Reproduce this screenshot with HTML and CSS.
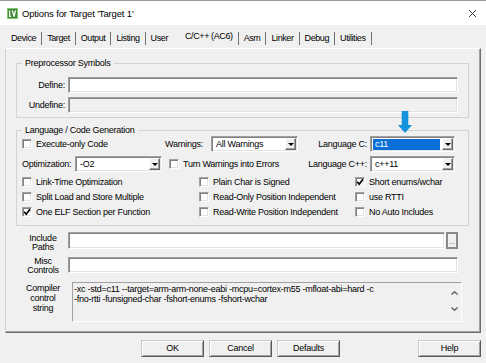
FILE: index.html
```html
<!DOCTYPE html>
<html lang="en">
<head>
    <meta charset="UTF-8">
    <meta name="viewport" content="width=device-width, initial-scale=1.0">
    <title>Options for Target 'Target 1'</title>
    <link rel="stylesheet" href="styles.css">
</head>
<body>

<div class="dialog">
    <div class="titlebar">
        <svg class="app-icon" viewBox="0 0 11 11">
            <rect width="11" height="11" fill="#3b8a35"/>
            <rect x="0.5" y="0.5" width="10" height="10" fill="none" stroke="#86c46f"/>
            <path d="M2.6 2.4v6h1.6M5.4 2.4l1.6 6.2 1.6-6.2" stroke="#fff" stroke-width="1.3" fill="none"/>
        </svg>
        <span class="title">Options for Target 'Target 1'</span>
        <svg class="close" viewBox="0 0 7 7">
            <path d="M0 0L7 7M7 0L0 7" stroke="#222" stroke-width="0.9"/>
        </svg>
    </div>

    <div class="tabs">
        <span class="tab">Device</span>
        <span class="tab">Target</span>
        <span class="tab">Output</span>
        <span class="tab">Listing</span>
        <span class="tab tab-user">User</span>
        <span class="tab tab-active">C/C++ (AC6)</span>
        <span class="tab">Asm</span>
        <span class="tab">Linker</span>
        <span class="tab">Debug</span>
        <span class="tab">Utilities</span>
    </div>

    <div class="panel">
        <fieldset class="group group-pre">
            <legend>Preprocessor Symbols</legend>
            <div class="field-row">
                <span class="field-label">Define:</span>
                <div class="edit"></div>
            </div>
            <div class="field-row">
                <span class="field-label">Undefine:</span>
                <div class="edit edit-disabled"></div>
            </div>
        </fieldset>

        <fieldset class="group group-lang">
            <legend>Language / Code Generation</legend>
            <div class="lang-top">
                <div class="check"><span class="box"></span>Execute-only Code</div>
                <div class="pair">
                    <span class="warn-label">Warnings:</span>
                    <div class="combo combo-small">
                        <span class="combo-text">All Warnings</span>
                        <span class="drop"><svg viewBox="0 0 6 3"><path d="M0 0h6L3 3z"/></svg></span>
                    </div>
                </div>
                <span class="right-label">Language C:</span>
                <div class="combo">
                    <span class="combo-text combo-selected">c11</span>
                    <span class="drop"><svg viewBox="0 0 6 3"><path d="M0 0h6L3 3z"/></svg></span>
                </div>

                <div class="pair">
                    <span class="opt-label">Optimization:</span>
                    <div class="combo combo-small">
                        <span class="combo-text">-O2</span>
                        <span class="drop"><svg viewBox="0 0 6 3"><path d="M0 0h6L3 3z"/></svg></span>
                    </div>
                </div>
                <div class="check check-indent"><span class="box"></span>Turn Warnings into Errors</div>
                <span class="right-label">Language C++:</span>
                <div class="combo">
                    <span class="combo-text">c++11</span>
                    <span class="drop"><svg viewBox="0 0 6 3"><path d="M0 0h6L3 3z"/></svg></span>
                </div>
            </div>

            <div class="lang-checks">
                <div class="check"><span class="box"></span>Link-Time Optimization</div>
                <div class="check"><span class="box"></span>Plain Char is Signed</div>
                <div class="check"><span class="box checked"><svg viewBox="0 0 8 8"><path d="M1.2 3.8l2 2.4 3.8-5"/></svg></span>Short enums/wchar</div>

                <div class="check"><span class="box"></span>Split Load and Store Multiple</div>
                <div class="check"><span class="box"></span>Read-Only Position Independent</div>
                <div class="check"><span class="box"></span>use RTTI</div>

                <div class="check"><span class="box checked"><svg viewBox="0 0 8 8"><path d="M1.2 3.8l2 2.4 3.8-5"/></svg></span>One ELF Section per Function</div>
                <div class="check"><span class="box"></span>Read-Write Position Independent</div>
                <div class="check"><span class="box"></span>No Auto Includes</div>
            </div>
        </fieldset>

        <div class="path-row row-include">
            <span class="path-label">Include<br>Paths</span>
            <div class="edit edit-include"></div>
            <span class="browse">...</span>
        </div>

        <div class="path-row row-misc">
            <span class="path-label">Misc<br>Controls</span>
            <div class="edit edit-misc"></div>
        </div>

        <div class="path-row row-cmd">
            <span class="path-label">Compiler<br>control<br>string</span>
            <div class="cmd">
                <div class="cmd-text">
                    <span>-xc -std=c11 --target=arm-arm-none-eabi -mcpu=cortex-m55 -mfloat-abi=hard -c</span>
                    <span>-fno-rtti -funsigned-char -fshort-enums -fshort-wchar</span>
                </div>
                <div class="cmd-scroll">
                    <svg viewBox="0 0 7 4"><path d="M0.5 3.5L3.5 0.7 6.5 3.5"/></svg>
                    <svg viewBox="0 0 7 4"><path d="M0.5 0.5L3.5 3.3 6.5 0.5"/></svg>
                </div>
            </div>
        </div>
    </div>

    <div class="buttons">
        <span class="btn">OK</span>
        <span class="btn">Cancel</span>
        <span class="btn">Defaults</span>
        <span class="btn btn-help">Help</span>
    </div>

    <!-- callout pointing at the Language C combo -->
    <svg class="pointer" viewBox="0 0 14 22">
        <rect x="3.7" y="0" width="6.6" height="15" fill="#1592dd"/>
        <path d="M0 14h14L7 22z" fill="#1592dd"/>
    </svg>
</div>

</body>
</html>
```

FILE: styles.css
```css
/* General Styling */
* {
    box-sizing: border-box;
    margin: 0;
    padding: 0;
}

body {
    font-family: "Liberation Sans", Arial, sans-serif;
    font-size: 9px;
    letter-spacing: -0.25px;
    color: #000;
    background: #f0f0f0;
}

.dialog {
    position: relative;
    width: 486px;
    height: 363px;
    background: #f0f0f0;
    overflow: hidden;
}

/* Title bar */
.titlebar {
    display: flex;
    align-items: center;
    height: 25px;
    background: #fff;
    border-top: 1px solid #9a9a9a;
    padding-left: 7px;
}

.app-icon {
    width: 11px;
    height: 11px;
    margin-right: 4px;
}

.title {
    flex: 1;
    font-size: 9.5px;
    letter-spacing: -0.15px;
}

.close {
    width: 7px;
    height: 7px;
    margin-right: 10px;
}

/* Tabs */
.tabs {
    display: flex;
    height: 13px;
    margin-top: 7px;
    padding-left: 6px;
    letter-spacing: -0.4px;
}

.tab {
    height: 13px;
    padding: 0 5px;
    line-height: 13px;
    border-right: 1px solid #707070;
}

.tab-user {
    border-right: none;
}

.tab-active {
    padding-left: 12px;
    line-height: 9px;
}

.panel {
    width: 476px;
    height: 285px;
    margin: 3px 0 0 5px;
    padding-top: 9px;
    border: 1px solid;
    border-color: #fff #6f6f6f #6f6f6f #d3d3d3;
    box-shadow: inset -1px -1px 0 #a0a0a0;
}

/* Group boxes */
.group {
    width: 453px;
    margin-left: 10px;
    padding: 0 10px 0 5px;
    border: 1px solid #d3d3d3;
}

.group legend {
    padding: 0 3px;
    line-height: 11px;
}

.group-pre {
    padding-top: 8px;
    padding-bottom: 4px;
}

.group-lang {
    margin-top: 7px;
    padding-bottom: 6px;
}

.field-row {
    display: flex;
    align-items: center;
    height: 16px;
}

.field-row + .field-row {
    margin-top: 4px;
}

.field-label {
    width: 43px;
    margin-right: 3px;
    text-align: right;
}

.edit {
    flex: 1;
    height: 16px;
    background: #fff;
    border: 1px solid;
    border-color: #a0a0a0 #fff #fff #a0a0a0;
    box-shadow: inset 1px 1px 0 #828282, inset -1px -1px 0 #e3e3e3;
}

.edit-disabled {
    background: #f0f0f0;
}

/* Language / Code Generation */
.lang-top {
    display: grid;
    grid-template-columns: 143px 135px 70px 85px;
    grid-template-rows: 16px 16px;
    row-gap: 4px;
    align-items: center;
}

.lang-checks {
    display: grid;
    grid-template-columns: 177px 156px 1fr;
    grid-auto-rows: 15px;
    align-items: center;
    margin-top: 2px;
}

.pair {
    display: flex;
    align-items: center;
}

.warn-label {
    width: 46px;
}

.opt-label {
    width: 53px;
}

.right-label {
    padding-right: 3px;
    text-align: right;
}

.check {
    display: flex;
    align-items: center;
    white-space: nowrap;
}

.check-indent {
    padding-left: 4px;
}

.box {
    display: flex;
    align-items: center;
    justify-content: center;
    width: 10px;
    height: 10px;
    margin-right: 4px;
    background: #fff;
    border: 1px solid;
    border-color: #a0a0a0 #fff #fff #a0a0a0;
    box-shadow: inset 1px 1px 0 #828282, inset -1px -1px 0 #e3e3e3;
}

.box svg {
    width: 8px;
    height: 8px;
    fill: none;
    stroke: #000;
    stroke-width: 1.7;
}

.combo {
    display: flex;
    height: 16px;
    background: #fff;
    border: 1px solid;
    border-color: #a0a0a0 #fff #fff #a0a0a0;
    box-shadow: inset 1px 1px 0 #828282, inset -1px -1px 0 #e3e3e3;
    padding: 1px;
}

.combo-small {
    width: 87px;
}

.combo-text {
    flex: 1;
    margin: 1px 2px 0 1px;
    padding-left: 2px;
    line-height: 11px;
    white-space: nowrap;
}

.combo-selected {
    background: #0a6fd6;
    color: #fff;
}

.drop {
    display: flex;
    align-items: center;
    justify-content: center;
    width: 11px;
    background: #f0f0f0;
    border: 1px solid;
    border-color: #fff #696969 #696969 #fff;
    box-shadow: inset -1px -1px 0 #a0a0a0;
}

.drop svg {
    width: 6px;
    height: 3px;
    fill: #000;
}

/* Path / control rows */
.path-row {
    display: flex;
    align-items: flex-start;
    padding-left: 18px;
}

.path-label {
    width: 38px;
    margin-right: 6px;
    text-align: center;
    line-height: 8.5px;
}

.row-include {
    height: 17px;
    margin-top: 6px;
}

.row-include .path-label {
    padding-top: 2px;
}

.row-misc {
    height: 16px;
    margin-top: 8px;
}

.row-cmd {
    height: 40px;
    margin-top: 9px;
}

.row-cmd .path-label {
    padding-top: 1px;
    line-height: 10px;
}

.edit-include {
    flex: none;
    width: 377px;
    height: 17px;
}

.edit-misc {
    flex: none;
    width: 390px;
}

.browse {
    width: 12px;
    height: 17px;
    margin-left: 1px;
    background: #f0f0f0;
    border: 2px solid #8a8a8a;
    font-size: 8px;
    line-height: 16px;
    text-align: center;
    color: #555;
}

.cmd {
    display: flex;
    width: 390px;
    height: 40px;
    margin-left: 4px;
    background: #f0f0f0;
    border: 1px solid;
    border-color: #a0a0a0 #fff #fff #a0a0a0;
}

.cmd-text {
    flex: 1;
    display: flex;
    flex-direction: column;
    padding: 1px 0 0 1px;
    line-height: 10px;
    white-space: nowrap;
}

.cmd-scroll {
    display: flex;
    flex-direction: column;
    align-items: center;
    gap: 12px;
    width: 13px;
    padding-top: 8px;
}

.cmd-scroll svg {
    width: 7px;
    height: 4px;
    fill: none;
    stroke: #5a5a5a;
    stroke-width: 1.2;
}

/* Dialog buttons */
.buttons {
    display: flex;
    gap: 5px;
    margin-top: 7px;
    padding: 0 5px 0 141px;
}

.btn {
    width: 63px;
    height: 17px;
    line-height: 15px;
    text-align: center;
    background: #f0f0f0;
    border: 1px solid;
    border-color: #c8c8c8 #5a5a5a #5a5a5a #c8c8c8;
    box-shadow: inset 1px 1px 0 #fff, inset -1px -1px 0 #a0a0a0;
}

.btn-help {
    margin-left: auto;
}

.pointer {
    position: absolute;
    left: 398px;
    top: 111px;
    width: 14px;
    height: 22px;
}
```
